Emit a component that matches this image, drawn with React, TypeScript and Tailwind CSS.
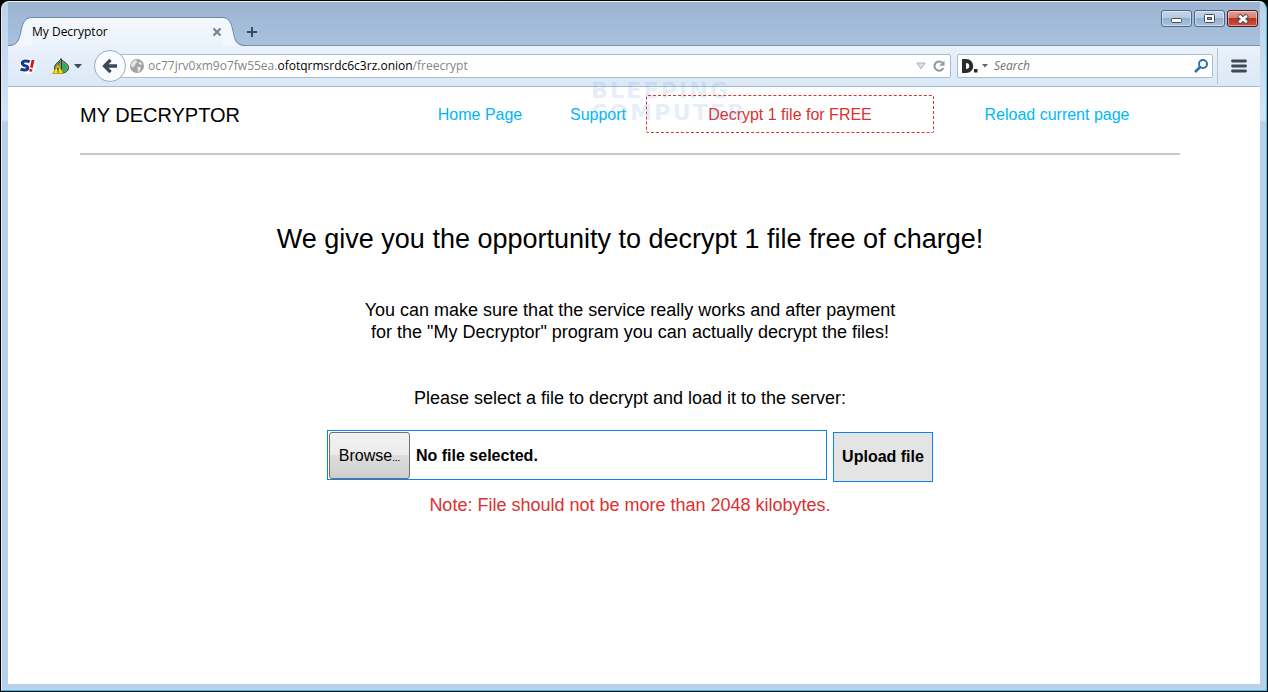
import { useState } from "react";

const uiFont = "font-['Open_Sans','Noto_Sans',sans-serif]";
const pageFont = "font-['Liberation_Sans',Arial,sans-serif]";

function WindowButtons() {
  const base =
    "flex h-[17px] w-[31px] items-center justify-center rounded-[3px] border shadow-[inset_0_0_0_1px_rgba(255,255,255,0.45)]";
  const blue =
    "border-[#4f6484] bg-[linear-gradient(#c3d4e8_0%,#b4c9e1_48%,#94afcf_50%,#abc3de_100%)]";

  return (
    <div className="flex gap-0.5 pt-2">
      <button aria-label="Minimize" className={`${base} ${blue}`}>
        <svg width="12" height="12" viewBox="0 0 12 12">
          <rect x="0.5" y="5.5" width="10" height="4" rx="1" fill="#fff" stroke="#454b5c" />
        </svg>
      </button>
      <button aria-label="Maximize" className={`${base} ${blue}`}>
        <svg width="12" height="12" viewBox="0 0 12 12">
          <rect x="0.5" y="1.5" width="10" height="8" rx="1" fill="#fff" stroke="#454b5c" />
          <rect x="3.5" y="4.5" width="4" height="2" fill="#8ba7c9" stroke="#454b5c" />
        </svg>
      </button>
      <button
        aria-label="Close"
        className={`${base} border-[#4b1a1e] bg-[linear-gradient(#e3a294_0%,#d17f70_48%,#b8341f_50%,#c9543f_100%)]`}
      >
        <svg width="12" height="12" viewBox="0 0 12 12">
          <path d="M1.6 2.2 L10.4 9.8 M10.4 2.2 L1.6 9.8" stroke="#5a4a5c" strokeWidth="4.6" />
          <path d="M2.2 2.7 L9.8 9.3 M9.8 2.7 L2.2 9.3" stroke="#fff" strokeWidth="2.6" />
        </svg>
      </button>
    </div>
  );
}

function TabBar() {
  return (
    <div className="flex h-11 items-start justify-between border-b border-[#7b92ae] bg-[linear-gradient(#9ab4d2,#a9c2de)] pr-0.5">
      <div className="flex pt-[15px]">
        <div className="flex h-[29px]">
          <svg width="24" height="29" viewBox="0 0 24 29">
            <path d="M0 29 C9 29 11 24 13 14 C15 4 18 0.5 24 0.5 V29 Z" fill="#f2f7fc" />
            <path d="M0 28.5 C9 28.5 11 24 13 14 C15 4 18 0.5 24 0.5" fill="none" stroke="#6e88a8" />
          </svg>
          <div className="flex w-[190px] items-center justify-between border-t border-[#6e88a8] bg-[linear-gradient(#f6f9fd,#eaf2fb)]">
            <span className="text-xs text-black">My Decryptor</span>
            <button aria-label="Close tab">
              <svg width="10" height="10" viewBox="0 0 10 10">
                <path d="M1.5 1.5 L8.5 8.5 M8.5 1.5 L1.5 8.5" stroke="#758492" strokeWidth="2.2" />
              </svg>
            </button>
          </div>
          <svg width="24" height="29" viewBox="0 0 24 29">
            <path d="M24 29 C14 29 13 24 11 14 C9 4 6 0.5 0 0.5 V29 Z" fill="#f2f7fc" />
            <path d="M24 28.5 C14 28.5 13 24 11 14 C9 4 6 0.5 0 0.5" fill="none" stroke="#6e88a8" />
          </svg>
        </div>
        <button aria-label="New tab" className="flex h-[29px] w-4 items-center">
          <svg width="12" height="12" viewBox="0 0 12 12">
            <path d="M6 1 V11 M1 6 H11" stroke="#3f4a5b" strokeWidth="2" />
          </svg>
        </button>
      </div>
      <WindowButtons />
    </div>
  );
}

function AddressBar() {
  return (
    <div className="flex h-[41px] items-center border-b border-[#a3bad3] bg-[linear-gradient(#eaf2fb,#dae8f7)] pl-3">
      <button aria-label="NoScript" className="w-4">
        <svg width="16" height="16" viewBox="0 0 16 16">
          <circle cx="8" cy="8" r="8" fill="#fff" />
          <path d="M9.6 3.9 C7.4 2.4 2.2 2.6 2.4 5.4 C2.6 8.6 8 7.2 7.8 9.9 C7.6 12.6 3.4 12.4 0.6 11.1" fill="none" stroke="#173a86" strokeWidth="3" />
          <path d="M13 2 L11.4 9.6 M11 11.2 L10.7 13.6" stroke="#e0101d" strokeWidth="2.8" />
        </svg>
      </button>
      <button aria-label="Tor options" className="ml-4 flex w-8 items-center gap-1">
        <svg width="18" height="18" viewBox="0 0 18 18">
          <path d="M9 1.5 C10 4.5 16.5 6 16.5 10.5 C16.5 14.5 13 16 9.5 16 C5 16 2.5 14.5 2.5 11 C2.5 6 8 4.5 9 1.5 Z" fill="#7d9483" stroke="#2f3f36" />
          <path d="M10.5 5.5 C16 8 16.5 13.5 10.5 15.5 Z" fill="#27b24a" />
          <path d="M9.5 2 V16 M7.5 5 C5 9 5.5 13 7 16" fill="none" stroke="#2f3f36" />
          <path d="M6 7.5 L11.5 16.5 H0.8 Z" fill="#ffe21c" stroke="#a98b00" strokeWidth="0.8" />
          <path d="M6 10.4 V13.4 M6 14.2 V15.4" stroke="#111" strokeWidth="1.2" />
        </svg>
        <svg width="8" height="5" viewBox="0 0 8 5">
          <path d="M0 0 H8 L4 4.5 Z" fill="#3f4a5b" />
        </svg>
      </button>
      <button
        aria-label="Back"
        className="relative z-10 ml-2.5 flex size-8 shrink-0 items-center justify-center rounded-full border border-[#98adc5] bg-[#f9fbfe]"
      >
        <svg width="16" height="16" viewBox="0 0 16 16">
          <path d="M8.5 1.8 L2.6 8 L8.5 14.2 M3 8 H15" fill="none" stroke="#3f4856" strokeWidth="3.4" />
        </svg>
      </button>
      <div className="-ml-2 flex h-6 flex-1 items-center rounded-r-xs border border-[#a8bbd0] bg-white pr-1 pl-[11px]">
        <svg width="14" height="14" viewBox="0 0 14 14">
          <circle cx="7" cy="7" r="7" fill="#a2a2a2" />
          <path d="M0.8 7 C1 4 3 1.6 6 1 L7.5 2.6 L5.6 5 L4.4 7.6 L3 8.6 Z M7 8.2 L10 7.6 L11 9.4 L9.4 12.6 L7.6 13 L7.8 10.6 Z M9 2.5 L12 4.5 L11.5 6 L8.5 5 Z" fill="#e4e4e4" />
        </svg>
        <div className="ml-1 flex-1 text-xs text-[#858585]">
          oc77jrv0xm9o7fw55ea.<span className="text-black">ofotqrmsrdc6c3rz.onion</span>/freecrypt
        </div>
        <svg width="10" height="8" viewBox="0 0 10 8">
          <path d="M0.8 1 H9.2 L5 6.8 Z" fill="#dde2e8" stroke="#a9b1bb" />
        </svg>
        <button aria-label="Reload" className="ml-1.5">
          <svg width="14" height="14" viewBox="0 0 14 14">
            <path d="M10.4 3.8 A4.6 4.6 0 1 0 11.3 9" fill="none" stroke="#8e99a5" strokeWidth="2" />
            <path d="M12.5 1.5 V6.8 H7.2 Z" fill="#8e99a5" />
          </svg>
        </button>
      </div>
      <div className="ml-1.5 flex h-6 w-64 items-center rounded-xs border border-[#a8bbd0] bg-white pr-1 pl-0.5">
        <svg width="18" height="16" viewBox="0 0 18 16">
          <path d="M4 3 H6 C13 3 13 13 6 13 H4 Z" fill="none" stroke="#2b2b2b" strokeWidth="4" />
          <rect x="14" y="11" width="3.5" height="3.5" fill="#2b2b2b" />
        </svg>
        <svg className="ml-1" width="6" height="4" viewBox="0 0 6 4">
          <path d="M0 0 H6 L3 3.5 Z" fill="#666" />
        </svg>
        <input
          aria-label="Search"
          placeholder="Search"
          className="ml-1.5 min-w-0 flex-1 text-xs text-black italic outline-none placeholder:text-[#6f6f6f]"
        />
        <button aria-label="Go">
          <svg width="14" height="14" viewBox="0 0 14 14">
            <circle cx="9" cy="5" r="4" fill="none" stroke="#336fa8" strokeWidth="2" />
            <path d="M6.2 8 L1 13" stroke="#336fa8" strokeWidth="2.6" />
          </svg>
        </button>
      </div>
      <div className="ml-1 flex h-9 w-[43px] items-center justify-center border-l border-[#b4c5d8]">
        <button aria-label="Menu">
          <svg width="18" height="14" viewBox="0 0 18 14">
            <path d="M2.5 2 H15.5 M2.5 7 H15.5 M2.5 12 H15.5" stroke="#3f4856" strokeWidth="2.8" strokeLinecap="round" />
          </svg>
        </button>
      </div>
    </div>
  );
}

function Watermark() {
  return (
    <div
      aria-hidden="true"
      className="pointer-events-none absolute top-[78px] left-[589px] font-['DejaVu_Sans',sans-serif] text-[22px] leading-[22px] font-bold tracking-widest text-[#7da5dd]/20"
    >
      BLEEPING
      <br />
      COMPUTER
    </div>
  );
}

export default function App() {
  const [fileName, setFileName] = useState("");

  return (
    <div className="min-h-screen bg-black p-px">
      <div
        className={`relative flex min-h-[calc(100vh-2px)] flex-col rounded-t-lg border border-t-[#e8f4fb] border-r-[#22cdea] border-b-[#22cdea] border-l-[#dfeaf6] bg-[linear-gradient(#bdd2ea_0px,#d3e4f6_118px,#b9d0ea_120px)] px-1.5 pb-1.5 ${uiFont}`}
      >
        <TabBar />
        <AddressBar />

        <div className={`flex-1 bg-white pr-2 text-black ${pageFont}`}>
          <div className="mx-auto max-w-[1100px]">
            <header className="flex items-center border-b-2 border-[#c8c8c8] pt-2 pb-5">
              <h1 className="w-[334px] pt-0.5 text-xl">MY DECRYPTOR</h1>
              <nav className="flex flex-1 items-center text-base text-[#00b7f9]">
                <a href="#home" className="w-[132px] pt-0.5 text-center">Home Page</a>
                <a href="#support" className="w-[100px] pt-0.5 pl-1 text-center">Support</a>
                <a
                  href="#freecrypt"
                  className="flex h-[38px] w-72 items-center justify-center rounded-xs border border-dashed border-[#dc3030] pt-0.5 text-[#dc3030]"
                >
                  Decrypt 1 file for FREE
                </a>
                <a href="#reload" className="flex-1 pt-0.5 text-center">Reload current page</a>
              </nav>
            </header>

            <main className="flex flex-col items-center pt-16 text-center text-lg leading-[22px]">
              <h2 className="text-[27px] leading-10">
                We give you the opportunity to decrypt 1 file free of charge!
              </h2>
              <p className="mt-10">
                You can make sure that the service really works and after payment
                <br />
                for the "My Decryptor" program you can actually decrypt the files!
              </p>
              <p className="mt-11">Please select a file to decrypt and load it to the server:</p>

              <form className="mt-[21px] flex items-start gap-1.5 text-base" onSubmit={(e) => e.preventDefault()}>
                <label
                  htmlFor="file"
                  className="flex h-[50px] w-[500px] cursor-pointer items-center border border-[#0a84f0] pt-px pl-px"
                >
                  <span className="flex h-[47px] w-[81px] items-center justify-center rounded-[3px] border border-[#707070] bg-[linear-gradient(#f2f2f2_0%,#ebebeb_48%,#dddddd_50%,#cfcfcf_100%)]">
                    <span>
                      Browse<span className="text-[8px] font-bold">…</span>
                    </span>
                  </span>
                  <span className="ml-1.5 font-bold">{fileName || "No file selected."}</span>
                  <input
                    id="file"
                    type="file"
                    className="sr-only"
                    onChange={(e) => setFileName(e.target.files?.[0]?.name ?? "")}
                  />
                </label>
                <button className="mt-0.5 h-[50px] w-[100px] border border-[#0a84f0] bg-[#e4e4e4] font-bold">
                  Upload file
                </button>
              </form>
              <p className="mt-3 text-[#dc3030]">Note: File should not be more than 2048 kilobytes.</p>
            </main>
          </div>
        </div>

        <Watermark />
      </div>
    </div>
  );
}
